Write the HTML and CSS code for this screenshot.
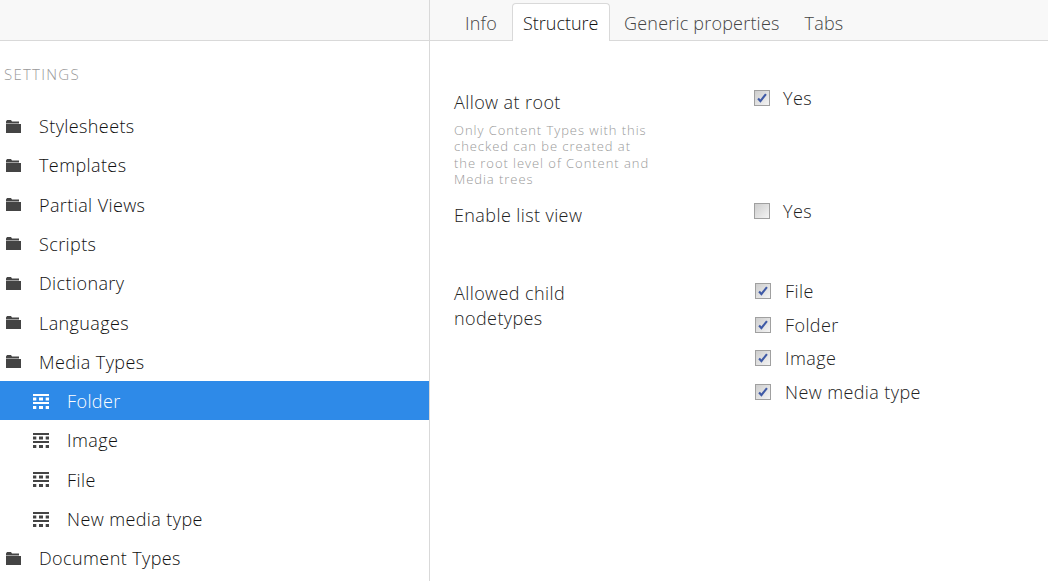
FILE: index.html
```html
<!DOCTYPE html>
<html lang="en">
<head>
    <meta charset="UTF-8">
    <title>Media Types</title>
    <link rel="stylesheet" href="styles.css">
</head>
<body>
    <svg class="defs" width="0" height="0">
        <symbol id="folder" viewBox="0 0 15 13">
            <path d="M0 1.5 L1 0 H5 L6 1.5 H13 V3.5 H0 Z M0 4 H15 V13 H0 Z" fill="currentColor"/>
        </symbol>
        <symbol id="grid" viewBox="0 0 16 15">
            <path d="M0 0 H16 V2 H0 Z M0 3.5 H3.3 V6.5 H0 Z M6 3.5 H10 V6.5 H6 Z M12.7 3.5 H16 V6.5 H12.7 Z M0 8 H16 V10 H0 Z M0 12 H3.3 V15 H0 Z M6 12 H10 V15 H6 Z M12.7 12 H16 V15 H12.7 Z" fill="currentColor"/>
        </symbol>
        <symbol id="check" viewBox="0 0 16 16">
            <path d="M3.5 8.5 L6.2 11.5 L12.5 3.5" fill="none" stroke="#3f5aa6" stroke-width="2.4"/>
        </symbol>
    </svg>
    <div class="page">
        <aside class="sidebar">
            <div class="sidebar-top"></div>
            <div class="section-title">SETTINGS</div>
            <ul class="tree">
                <li class="tree-row"><svg class="icon"><use href="#folder"/></svg>Stylesheets</li>
                <li class="tree-row"><svg class="icon"><use href="#folder"/></svg>Templates</li>
                <li class="tree-row"><svg class="icon"><use href="#folder"/></svg>Partial Views</li>
                <li class="tree-row"><svg class="icon"><use href="#folder"/></svg>Scripts</li>
                <li class="tree-row"><svg class="icon"><use href="#folder"/></svg>Dictionary</li>
                <li class="tree-row"><svg class="icon"><use href="#folder"/></svg>Languages</li>
                <li class="tree-row"><svg class="icon"><use href="#folder"/></svg>Media Types</li>
                <li class="tree-row child active"><svg class="icon"><use href="#grid"/></svg>Folder</li>
                <li class="tree-row child"><svg class="icon"><use href="#grid"/></svg>Image</li>
                <li class="tree-row child"><svg class="icon"><use href="#grid"/></svg>File</li>
                <li class="tree-row child"><svg class="icon"><use href="#grid"/></svg>New media type</li>
                <li class="tree-row"><svg class="icon"><use href="#folder"/></svg>Document Types</li>
            </ul>
        </aside>
        <main class="content">
            <nav class="tabs">
                <span class="tab">Info</span>
                <span class="tab active">Structure</span>
                <span class="tab">Generic properties</span>
                <span class="tab">Tabs</span>
            </nav>
            <div class="form">
                <div class="prop prop-root">
                    <div class="prop-label">
                        Allow at root
                        <small>Only Content Types with this checked can be created at the root level of Content and Media trees</small>
                    </div>
                    <label class="check"><span class="box"><svg><use href="#check"/></svg></span>Yes</label>
                </div>
                <div class="prop prop-list">
                    <div class="prop-label">Enable list view</div>
                    <label class="check"><span class="box"></span>Yes</label>
                </div>
                <div class="prop prop-child">
                    <div class="prop-label">Allowed child<br>nodetypes</div>
                    <div class="check-list">
                        <label class="check"><span class="box"><svg><use href="#check"/></svg></span>File</label>
                        <label class="check"><span class="box"><svg><use href="#check"/></svg></span>Folder</label>
                        <label class="check"><span class="box"><svg><use href="#check"/></svg></span>Image</label>
                        <label class="check"><span class="box"><svg><use href="#check"/></svg></span>New media type</label>
                    </div>
                </div>
            </div>
        </main>
    </div>
</body>
</html>
```

FILE: styles.css
```css
html, body {
    height: 100%;
}
body {
    margin: 0;
    background-color: #fff;
    color: #222;
    font-family: "Open Sans", sans-serif;
    font-weight: 300;
    font-size: 18px;
    letter-spacing: 0.4px;
    overflow: hidden;
}
.defs {
    position: absolute;
}
.page {
    display: flex;
    height: 581px;
}
.sidebar {
    width: 429px;
    flex: none;
    border-right: 1px solid #d9d9d9;
}
.sidebar-top {
    height: 40px;
    background-color: #f8f8f8;
    border-bottom: 1px solid #d9d9d9;
}
.section-title {
    margin: 24px 0 0 4px;
    height: 20px;
    line-height: 18px;
    font-size: 15px;
    font-weight: 300;
    color: #999;
    letter-spacing: 1.25px;
}
.tree {
    list-style: none;
    margin: 20.95px 0 0;
    padding: 0;
}
.tree-row {
    display: flex;
    align-items: center;
    box-sizing: border-box;
    height: 39.3px;
    padding: 1px 0 0 6px;
    color: #111;
}
.tree-row .icon {
    width: 15px;
    height: 13px;
    margin-right: 18px;
    color: #444;
}
.tree-row.child {
    padding-left: 33px;
}
.tree-row.child .icon {
    width: 16px;
    height: 15px;
    margin-right: 18px;
}
.tree-row.active {
    background-color: #2e8ae8;
    color: #fff;
}
.tree-row.active .icon {
    color: #fff;
}
.content {
    flex: 1;
}
.tabs {
    display: flex;
    align-items: flex-end;
    height: 40px;
    padding-left: 24px;
    background-color: #f8f8f8;
    border-bottom: 1px solid #d9d9d9;
    letter-spacing: 0.2px;
}
.tab {
    height: 36px;
    line-height: 38px;
    padding: 0 10px;
    margin-right: 3px;
    color: #444;
    border: 1px solid transparent;
    border-bottom: 0;
    border-radius: 4px 4px 0 0;
}
.tab.active {
    height: 37px;
    margin-bottom: -1px;
    margin-left: 1px;
    margin-right: 3.5px;
    background-color: #fff;
    border-color: #d9d9d9;
    color: #111;
    letter-spacing: 0;
}
.form {
    padding: 49px 0 0 24px;
}
.prop {
    display: flex;
}
.prop-label {
    width: 300px;
    flex: none;
    line-height: 25px;
    color: #222;
}
.prop-label small {
    display: block;
    width: 199px;
    margin-top: 7px;
    font-size: 13px;
    font-weight: 300;
    line-height: 16.3px;
    letter-spacing: 0.95px;
    color: #999;
}
.prop-root {
    height: 113px;
}
.prop-list {
    height: 78px;
}
.prop-root .check,
.prop-list .check {
    margin-top: -5px;
    height: 25px;
}
.check {
    display: flex;
    align-items: center;
    height: 33.6px;
    color: #222;
}
.box {
    display: block;
    width: 14px;
    height: 14px;
    margin-right: 14px;
    border: 1px solid #a0a0a0;
    background: linear-gradient(135deg, #cdcdcd, #f4f4f4);
}
.prop-root .box,
.prop-list .box {
    margin-right: 13px;
}
.box svg {
    display: block;
    width: 14px;
    height: 14px;
}
.check-list {
    margin-top: -6.7px;
    margin-left: 1px;
}
```
